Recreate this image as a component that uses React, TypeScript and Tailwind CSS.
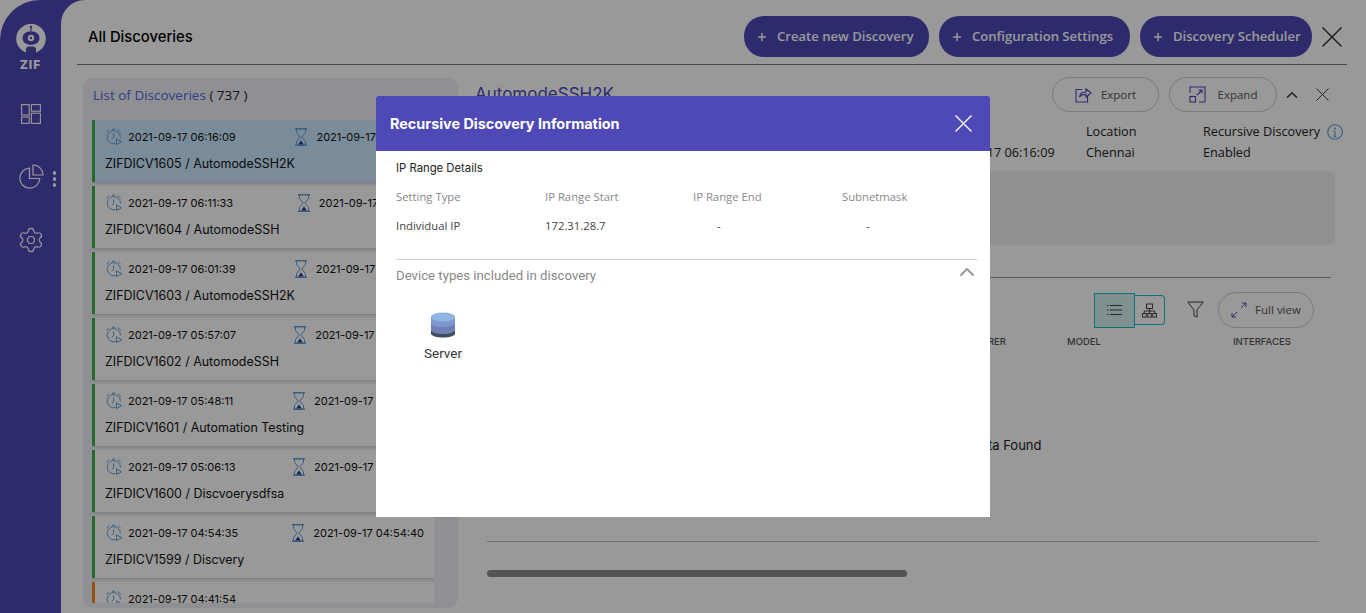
import React from 'react';
import { ChevronUp, Plus, Settings } from 'lucide-react';

const discoveries = [
  { start: '2021-09-17 06:16:09', end: '2021-09-17 06:16:20', name: 'ZIFDICV1605 / AutomodeSSH2K', active: true },
  { start: '2021-09-17 06:11:33', end: '2021-09-17 06:11:38', name: 'ZIFDICV1604 / AutomodeSSH' },
  { start: '2021-09-17 06:01:39', end: '2021-09-17 06:01:44', name: 'ZIFDICV1603 / AutomodeSSH2K' },
  { start: '2021-09-17 05:57:07', end: '2021-09-17 05:57:42', name: 'ZIFDICV1602 / AutomodeSSH' },
  { start: '2021-09-17 05:48:11', end: '2021-09-17 05:48:26', name: 'ZIFDICV1601 / Automation Testing' },
  { start: '2021-09-17 05:06:13', end: '2021-09-17 05:06:20', name: 'ZIFDICV1600 / Discvoerysdfsa' },
  { start: '2021-09-17 04:54:35', end: '2021-09-17 04:54:40', name: 'ZIFDICV1599 / Discvery' },
  { start: '2021-09-17 04:41:54', failed: true },
];

const ClockPlay = () => (
  <svg width="18" height="18" viewBox="0 0 18 18" fill="none" stroke="#5b9fd6" strokeWidth="1" className="shrink-0">
    <path d="M10.5 15.6A6.6 6.6 0 1 1 15.4 9.5" />
    <path d="M8.6 5.5V9.6L6.6 11.4" />
    <path d="M1.5 4.2 4.2 1.6M13 1.6 15.8 4.2M7 1.2H10" />
    <path d="M11.5 10.8V16.6L16.6 13.7Z" />
  </svg>
);

const Hourglass = () => (
  <svg width="14" height="18" viewBox="0 0 14 18" className="shrink-0">
    <path d="M1 .8H13M1 17.2H13" stroke="#5b9fd6" strokeWidth="1.4" />
    <path d="M2.5 1V4.5L6.2 9 2.5 13.5V17M11.5 1V4.5L7.8 9 11.5 13.5V17" fill="none" stroke="#5b9fd6" />
    <path d="M4.2 16.4 7 12.4 9.8 16.4Z" fill="#23358f" />
  </svg>
);

const CloseIcon = ({ size, stroke, width = 1.2 }: { size: number; stroke: string; width?: number }) => (
  <svg width={size} height={size} viewBox={`0 0 ${size} ${size}`} stroke={stroke} strokeWidth={width} className="shrink-0">
    <path d={`M.5 .5 ${size - 0.5} ${size - 0.5}M${size - 0.5} .5 .5 ${size - 0.5}`} />
  </svg>
);

const Logo = () => (
  <svg width="30" height="30" viewBox="0 0 30 30">
    <path d="M10 28.6A14.8 14.8 0 1 1 20 28.6V25.5C20 23.6 18.6 22.6 17 22.6H13C11.4 22.6 10 23.6 10 25.5Z" fill="#fff" />
    <path d="M6.5 14C6.5 10 10 7.2 15 7.2S23.5 10 23.5 14 20 20.8 15 20.8 6.5 18 6.5 14Z" fill="#4e49b6" />
    <circle cx="15" cy="14" r="3.2" fill="#fff" />
    <circle cx="15" cy="14" r="1.2" fill="#4e49b6" />
    <path d="M15 2.5V7" stroke="#4e49b6" strokeWidth="1.2" />
    <circle cx="15" cy="3" r="1.2" fill="#4e49b6" />
  </svg>
);

const TilesIcon = () => (
  <svg width="20" height="20" viewBox="0 0 20 20" fill="none" stroke="#fff" strokeWidth="1.1">
    <rect x=".6" y=".6" width="7.6" height="10.4" />
    <rect x="10.4" y=".6" width="9" height="6.6" />
    <rect x=".6" y="13" width="7.6" height="6.4" />
    <rect x="10.4" y="9.2" width="9" height="10.2" />
  </svg>
);

const PieIcon = () => (
  <svg width="25" height="25" viewBox="0 0 25 25" fill="none" stroke="#fff" strokeWidth="1.2">
    <path d="M10.5 4.2A10 10 0 1 0 20.8 14.5H10.5Z" />
    <path d="M14 1A10 10 0 0 1 24 11H14Z" />
  </svg>
);

const InfoIcon = () => (
  <svg width="16" height="16" viewBox="0 0 16 16" fill="none" stroke="#5b9fd6" className="shrink-0">
    <circle cx="8" cy="8" r="7.3" strokeWidth="1.1" />
    <path d="M8 7V12.4M6.6 7H8M6.6 12.4H9.4" strokeWidth="1.1" />
    <circle cx="8" cy="4.4" r=".9" fill="#5b9fd6" stroke="none" />
  </svg>
);

const ExportIcon = () => (
  <svg width="17" height="16" viewBox="0 0 17 16" fill="none" stroke="#4e49b6" strokeWidth="1.1">
    <path d="M7 2.5H1V15H12.5V9" />
    <path d="M4.5 10C5 6.5 7.5 5 11 5V2L16 6 11 10V7.4C8.5 7.4 6 8 4.5 10Z" />
  </svg>
);

const ExpandIcon = () => (
  <svg width="17" height="17" viewBox="0 0 17 17" fill="none" stroke="#4e49b6" strokeWidth="1.1">
    <path d="M1 7V1H16V16H10" />
    <rect x="1" y="10.5" width="5.5" height="5.5" />
    <path d="M8 9 13 4M9.5 4H13V7.5" />
  </svg>
);

const Funnel = () => (
  <svg width="17" height="17" viewBox="0 0 17 17" fill="none" stroke="#444" strokeWidth="1">
    <path d="M.8 1H16.2L10 9V16L7 14.6V9Z" />
  </svg>
);

const TreeIcon = () => (
  <svg width="15" height="15" viewBox="0 0 15 15" fill="none" stroke="#333" strokeWidth="0.9">
    <rect x="4.5" y="1" width="6" height="4.6" />
    <path d="M7.5 5.6V8M2.2 10.5V8H12.8V10.5M7.5 8V10.5" />
    <rect x=".6" y="10.5" width="3.6" height="3.6" />
    <rect x="5.7" y="10.5" width="3.6" height="3.6" />
    <rect x="10.8" y="10.5" width="3.6" height="3.6" />
  </svg>
);

const ListIcon = () => (
  <svg width="15" height="12" viewBox="0 0 15 12" stroke="#444" strokeWidth="1">
    <path d="M0 1.5H1.5M3 1.5H15M0 6H1.5M3 6H15M0 10.5H1.5M3 10.5H15" />
  </svg>
);

const FullViewIcon = () => (
  <svg width="16" height="16" viewBox="0 0 16 16" fill="none" stroke="#4e49b6" strokeWidth="1">
    <path d="M1 15 6 10M1 11V15H5M15 1 10 6M11 1H15V5" />
  </svg>
);

const ServerIcon = () => (
  <svg width="24" height="26" viewBox="0 0 24 26">
    <path d="M0 18H24V21.5C24 24 18 25.5 12 25.5S0 24 0 21.5Z" fill="#3f4d5c" />
    <path d="M0 11H24V18C24 20.5 18 22 12 22S0 20.5 0 18Z" fill="#707fb4" />
    <path d="M0 5H24V11C24 13.5 18 15 12 15S0 13.5 0 11Z" fill="#7f97cd" />
    <ellipse cx="12" cy="5" rx="12" ry="4.6" fill="#8db6e2" />
  </svg>
);

const HeaderButton = ({ label, className }: { label: string; className: string }) => (
  <button className={`flex h-[41px] items-center rounded-[20px] bg-[#4e49b6] pl-[12px] font-['Open_Sans',sans-serif] text-[13.1px] font-semibold text-white ${className}`}>
    <Plus size={12} strokeWidth={3} className="mr-[9px]" />
    {label}
  </button>
);

const App = () => {
  return (
    <div className="relative h-[613px] w-[1366px] overflow-hidden bg-white font-['Inter',sans-serif]">
      <div className="flex h-full rounded-tl-[40px] bg-[#4e49b6]">
        {/* side nav */}
        <aside className="flex w-[61px] shrink-0 flex-col items-center pt-[24px] text-white">
          <Logo />
          <span className="mt-[4px] text-[12px] font-extrabold leading-[14px] tracking-[1px]">ZIF</span>
          <span className="mt-[32px]"><TilesIcon /></span>
          <div className="relative mt-[40px] ml-[1px]">
            <PieIcon />
            <div className="absolute left-[34px] top-[7px] flex flex-col gap-[2px]">
              <span className="h-[4px] w-[3px] rounded-full bg-white" />
              <span className="h-[4px] w-[3px] rounded-full bg-white" />
              <span className="h-[4px] w-[3px] rounded-full bg-white" />
            </div>
          </div>
          <Settings size={28} strokeWidth={1} className="mt-[37px]" />
        </aside>

        <main className="min-w-0 flex-1 rounded-tl-[24px] bg-white pl-[16px] pr-[19px] pt-[16px]">
          <header className="flex h-[49px] items-start border-b border-[#777]">
            <h1 className="mt-[11px] ml-[11px] text-[14.8px] font-medium leading-[20px] text-black">All Discoveries</h1>
            <div className="ml-auto flex items-center gap-[10px]">
              <HeaderButton label="Create new Discovery" className="w-[185px]" />
              <HeaderButton label="Configuration Settings" className="w-[191px]" />
              <HeaderButton label="Discovery Scheduler" className="w-[172px]" />
              <span className="mr-[5px]"><CloseIcon size={20} stroke="#222" width={1.3} /></span>
            </div>
          </header>

          <div className="mt-[13px] flex">
            {/* discovery list */}
            <section className="ml-[6px] h-[530px] w-[375px] shrink-0 overflow-hidden rounded-[10px] bg-[#eef0f5] pl-[10px]">
              <h2 className="mt-[8px] h-[34px] font-['Open_Sans',sans-serif] text-[13.5px] leading-[18px] text-[#1f1f1f]">
                <span className="text-[#4e68d8]">List of Discoveries</span> ( 737 )
              </h2>
              <div className="-ml-[1px] flex h-[483px] w-[342px] flex-col gap-[4px] overflow-hidden">
                {discoveries.map((d) => (
                  <article
                    key={d.start}
                    className={`h-[62px] shrink-0 border-l-[3px] px-[10px] pt-[7px] shadow-[0_1px_2px_rgba(0,0,0,0.15)] ${d.failed ? 'border-[#f5871f]' : 'border-[#3fb54a]'} ${d.active ? 'bg-[#cce9ff]' : 'bg-white'}`}
                  >
                    <div className="flex h-[20px] items-center justify-between text-[11px] text-[#111]">
                      <span className="flex items-center gap-[5px]">
                        <ClockPlay />
                        {d.start}
                      </span>
                      {d.end && (
                        <span className="flex items-center gap-[8px]">
                          <Hourglass />
                          {d.end}
                        </span>
                      )}
                    </div>
                    {d.name && <p className="mt-[8px] text-[12.45px] leading-[18px] text-[#111]">{d.name}</p>}
                  </article>
                ))}
              </div>
            </section>

            {/* detail panel */}
            <section className="-mt-[1px] ml-[17px] min-w-0 flex-1">
              <div className="flex h-[35px] items-center">
                <h2 className="text-[17px] text-[#4e49b6]">AutomodeSSH2K</h2>
                <div className="ml-auto mr-[13px] flex items-center font-['Open_Sans',sans-serif] text-[11.5px] text-[#555]">
                  <button className="flex h-[35px] w-[107px] items-center justify-center gap-[9px] rounded-[18px] border border-[#ccc]">
                    <ExportIcon />
                    Export
                  </button>
                  <button className="ml-[10px] flex h-[35px] w-[108px] items-center justify-center gap-[12px] rounded-[18px] border border-[#ccc]">
                    <ExpandIcon />
                    Expand
                  </button>
                  <ChevronUp size={18} strokeWidth={1.8} className="ml-[6px] text-[#333]" />
                  <span className="ml-[15px] mr-[5px]"><CloseIcon size={13} stroke="#444" width={1} /></span>
                </div>
              </div>
              <div className="mt-[9px] flex h-[42px] font-['Open_Sans',sans-serif] text-[12.7px] leading-[21px] text-[#222]">
                <div className="ml-auto w-[151px]">
                  <p>End Time</p>
                  <p>2021-09-17 06:16:09</p>
                </div>
                <div className="w-[117px]">
                  <p>Location</p>
                  <p>Chennai</p>
                </div>
                <div className="w-[144px]">
                  <p className="flex items-center gap-[7px]">Recursive Discovery <InfoIcon /></p>
                  <p>Enabled</p>
                </div>
              </div>
              <div className="mr-[12px] mt-[8px] h-[74px] rounded-[8px] bg-[#f1f1f1]" />
              <div className="mr-[16px] mt-[32px] h-px bg-[#999]" />

              <div className="mt-[14px] flex h-[36px] items-center justify-end pr-[33px]">
                <div className="flex h-[35px] w-[41px] items-center justify-center border border-[#18c0cc] bg-[#d4f1ee]">
                  <ListIcon />
                </div>
                <div className="flex h-[30px] w-[30px] items-center justify-center rounded-r-[4px] border border-l-0 border-[#18c0cc]">
                  <TreeIcon />
                </div>
                <span className="mb-[2px] ml-[22px]"><Funnel /></span>
                <button className="ml-[14px] flex h-[36px] w-[96px] items-center justify-center gap-[8px] rounded-[18px] border border-[#ccc] font-['Open_Sans',sans-serif] text-[11.5px] text-[#555]">
                  <FullViewIcon />
                  Full view
                </button>
              </div>

              <div className="mt-[7px] flex text-[9.5px] font-medium leading-[14px] text-[#555]">
                <span className="ml-[440px] w-[91px] whitespace-nowrap text-right">MANUFACTURER</span>
                <span className="ml-[61px] w-[166px]">MODEL</span>
                <span>INTERFACES</span>
              </div>
              <p className="ml-[475px] mt-[87px] text-[13px] leading-[18px] text-[#222]">No Data Found</p>
              <div className="ml-[12px] mr-[28px] mt-[87px] h-px bg-[#bbb]" />
              <div className="ml-[12px] mt-[28px] h-[7px] w-[420px] rounded-full bg-[#8c8c8c]" />
            </section>
          </div>
        </main>
      </div>

      {/* modal */}
      <div className="absolute inset-0 flex items-center justify-center bg-black/40">
        <div className="h-[421px] w-[614px] overflow-hidden rounded-t-[2px] bg-white">
          <div className="flex h-[55px] items-center justify-between bg-[#4e49b6] pl-[14px] pr-[18px]">
            <h3 className="text-[14.4px] font-bold text-white">Recursive Discovery Information</h3>
            <CloseIcon size={17} stroke="#fff" width={1.3} />
          </div>
          <div className="pl-[20px] pr-[13px]">
            <p className="mt-[9px] text-[11.3px] font-normal leading-[16px] text-[#222]">IP Range Details</p>
            <div className="mt-[13px] grid grid-cols-[149px_148px_149px_1fr] font-['Open_Sans',sans-serif] text-[11.3px] leading-[16px]">
              <span className="text-[#888]">Setting Type</span>
              <span className="text-[#888]">IP Range Start</span>
              <span className="text-[#888]">IP Range End</span>
              <span className="text-[#888]">Subnetmask</span>
              <span className="mt-[13px] text-[#444]">Individual IP</span>
              <span className="mt-[13px] text-[#444]">172.31.28.7</span>
              <span className="mt-[13px] pl-[24px] text-[#444]">-</span>
              <span className="mt-[13px] pl-[24px] text-[#444]">-</span>
            </div>
            <div className="mt-[25px] flex h-[31px] items-start justify-between border-t border-[#ccc] pt-[7px]">
              <span className="font-['Roboto',sans-serif] text-[13.2px] leading-[18px] text-[#888]">Device types included in discovery</span>
              <ChevronUp size={24} strokeWidth={2} className="-mr-[2px] -mt-[7px] text-[#999]" />
            </div>
            <div className="ml-[8px] mt-[22px] flex w-[78px] flex-col items-center">
              <ServerIcon />
              <span className="mt-[7px] font-['Roboto',sans-serif] text-[13.5px] leading-[16px] text-[#333]">Server</span>
            </div>
          </div>
        </div>
      </div>
    </div>
  );
};

export default App;
